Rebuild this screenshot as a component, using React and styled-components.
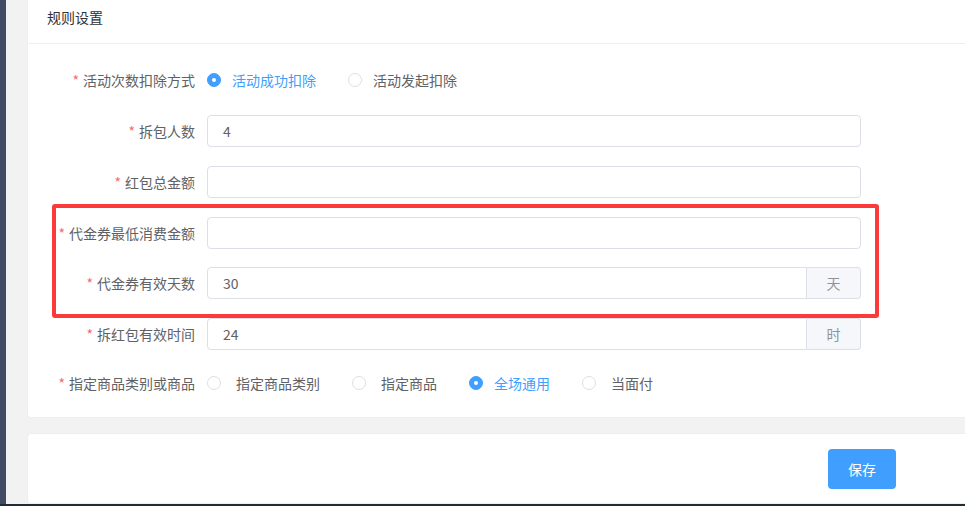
import React from 'react'
import styled, { createGlobalStyle } from 'styled-components'

const GlobalStyle = createGlobalStyle`
  html, body {
    margin: 0;
    padding: 0;
    overflow: hidden;
    background: #f2f2f2;
    font-family: "Noto Sans CJK SC", "Noto Sans", "Liberation Sans", sans-serif;
  }
`

const rows = [
  { label: '拆包人数', value: '4' },
  { label: '红包总金额', value: '' },
]

const boxedRows = [
  { label: '代金券最低消费金额', value: '' },
  { label: '代金券有效天数', value: '30', unit: '天' },
]

const scopes = [
  { text: '指定商品类别', checked: false },
  { text: '指定商品', checked: false },
  { text: '全场通用', checked: true },
  { text: '当面付', checked: false },
]

const Radio = ({ checked, text, spacing = 11 }) => (
  <RadioItem>
    <RadioDot $checked={checked} />
    <RadioText $checked={checked} $spacing={spacing}>
      {text}
    </RadioText>
  </RadioItem>
)

const Field = ({ label, value, unit, gap }) => (
  <FormItem $gap={gap}>
    <Label>
      <Star>*</Star>
      {label}
    </Label>
    <InputGroup>
      <Input $joined={!!unit}>{value}</Input>
      {unit && <Append>{unit}</Append>}
    </InputGroup>
  </FormItem>
)

const App = () => {
  return (
    <Page>
      <GlobalStyle />
      <Body>
        <Sidebar />
        <Main>
          <Card>
            <CardHeader>规则设置</CardHeader>
            <Form>
              <FormItem $gap='19px'>
                <Label>
                  <Star>*</Star>
                  活动次数扣除方式
                </Label>
                <RadioGroup>
                  <Radio checked text='活动成功扣除' />
                  <Radio text='活动发起扣除' />
                </RadioGroup>
              </FormItem>

              {rows.map((r) => (
                <Field key={r.label} {...r} />
              ))}

              <Marked>
                {boxedRows.map((r) => (
                  <Field key={r.label} {...r} />
                ))}
                <RedFrame />
              </Marked>

              <Field label='拆红包有效时间' value='24' unit='时' gap='17px' />

              <FormItem $gap='0px'>
                <Label>
                  <Star>*</Star>
                  指定商品类别或商品
                </Label>
                <RadioGroup $gap={32}>
                  {scopes.map((s) => (
                    <Radio
                      key={s.text}
                      checked={s.checked}
                      text={s.text}
                      spacing={s.checked ? 11 : 15}
                    />
                  ))}
                </RadioGroup>
              </FormItem>
            </Form>
          </Card>

          <FooterCard>
            <SaveButton>保存</SaveButton>
          </FooterCard>
        </Main>
      </Body>
      <BottomBar />
    </Page>
  )
}

export default App

const Page = styled.div`
  width: 965px;
  height: 506px;
  display: flex;
  flex-direction: column;
  overflow: hidden;
`

const Body = styled.div`
  flex: 1;
  display: flex;
  min-height: 0;
`

const Sidebar = styled.div`
  width: 6px;
  background: #414b63;
`

const Main = styled.div`
  flex: 1;
  padding-left: 21px;
  display: flex;
  flex-direction: column;
  gap: 15px;
`

const Card = styled.section`
  background: #fff;
  border-bottom: 1px solid #ebeef5;
  border-left: 1px solid #ebeef5;
  border-bottom-left-radius: 4px;
`

const CardHeader = styled.div`
  height: 44px;
  box-sizing: border-box;
  padding: 6px 0 0 19px;
  line-height: 22px;
  font-size: 14px;
  color: #303133;
  border-bottom: 1px solid #ebeef5;
`

const Form = styled.div`
  width: 814px;
  padding: 20px 0 18px 19px;
  display: flex;
  flex-direction: column;
`

const FormItem = styled.div`
  display: flex;
  align-items: center;
  height: 32px;
  margin-bottom: ${(p) => p.$gap || '18.75px'};
`

const Label = styled.label`
  width: 160px;
  flex-shrink: 0;
  box-sizing: border-box;
  padding-right: 12px;
  text-align: right;
  font-size: 14px;
  color: #606266;
  white-space: nowrap;
`

const Star = styled.span`
  color: #f56c6c;
  margin-right: 4px;
`

const InputGroup = styled.div`
  flex: 1;
  display: flex;
  height: 32px;
`

const Input = styled.div`
  flex: 1;
  box-sizing: border-box;
  height: 32px;
  line-height: 30px;
  padding: 0 15px;
  font-size: 14px;
  color: #606266;
  background: #fff;
  border: 1px solid #dcdfe6;
  border-radius: ${(p) => (p.$joined ? '4px 0 0 4px' : '4px')};
`

const Append = styled.div`
  width: 54px;
  box-sizing: border-box;
  height: 32px;
  line-height: 30px;
  text-align: center;
  font-size: 14px;
  color: #909399;
  background: #f5f7fa;
  border: 1px solid #dcdfe6;
  border-left: none;
  border-radius: 0 4px 4px 0;
`

const RadioGroup = styled.div`
  display: flex;
  align-items: center;
  gap: ${(p) => p.$gap || 32}px;
`

const RadioItem = styled.div`
  display: flex;
  align-items: center;
`

const RadioDot = styled.span`
  width: 14px;
  height: 14px;
  box-sizing: border-box;
  border-radius: 50%;
  border: 1px solid ${(p) => (p.$checked ? '#409eff' : '#dcdfe6')};
  background: ${(p) => (p.$checked ? '#409eff' : '#fff')};
  display: flex;
  align-items: center;
  justify-content: center;

  &::after {
    content: '';
    width: 4px;
    height: 4px;
    border-radius: 50%;
    background: #fff;
    display: ${(p) => (p.$checked ? 'block' : 'none')};
  }
`

const RadioText = styled.span`
  margin-left: ${(p) => p.$spacing}px;
  font-size: 14px;
  color: ${(p) => (p.$checked ? '#409eff' : '#606266')};
`

const Marked = styled.div`
  position: relative;
`

const RedFrame = styled.div`
  position: absolute;
  left: 5px;
  right: -18px;
  top: -13px;
  bottom: 0;
  border: 4px solid #fc3a3a;
  border-radius: 3px;
  pointer-events: none;
`

const FooterCard = styled.section`
  height: 71px;
  box-sizing: border-box;
  background: #fff;
  border: 1px solid #ebeef5;
  border-right: none;
  border-radius: 4px 0 0 4px;
  display: flex;
  align-items: center;
  justify-content: flex-end;
  padding-right: 69px;
`

const SaveButton = styled.button`
  width: 68px;
  height: 40px;
  border: none;
  border-radius: 4px;
  background: #409eff;
  color: #fff;
  font-size: 14px;
  font-family: inherit;
  cursor: pointer;
`

const BottomBar = styled.div`
  height: 2px;
  background: #1f2d36;
`
